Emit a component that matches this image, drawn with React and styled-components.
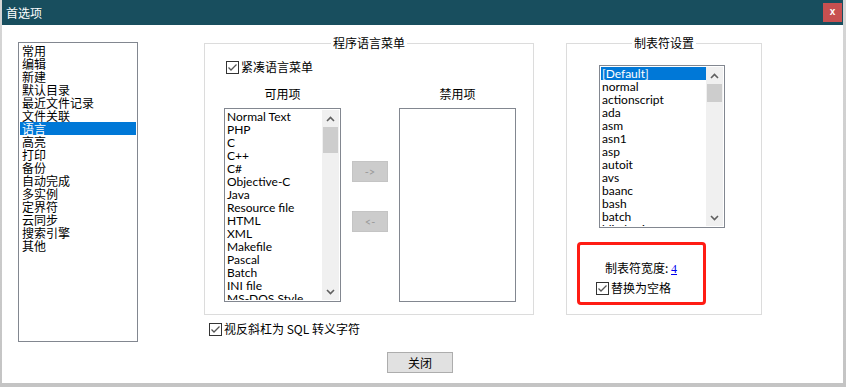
import React from 'react';
import styled, { createGlobalStyle } from 'styled-components';

const Global = createGlobalStyle`
  html, body { margin: 0; padding: 0; }
  body {
    width: 846px;
    height: 387px;
    overflow: hidden;
    background: linear-gradient(to bottom, #d6d6d6, #c4c4c4);
    font-family: "Noto Sans CJK SC", sans-serif;
  }
`;

const CJK = `"Noto Sans CJK SC", "Noto Sans", sans-serif`;
const LATIN = `Lato, "Noto Sans CJK SC", sans-serif`;

const Window = styled.div`
  margin-left: 2px;
  width: 841px;
  height: 383px;
  background: #fff;
  display: flex;
  flex-direction: column;
`;

const TitleBar = styled.div`
  height: 25px;
  flex: none;
  background: #184e5e;
  display: flex;
  align-items: center;
  justify-content: space-between;
  padding: 0 1px 0 4px;
  color: #fff;
  font: 12px ${CJK};
`;

const CloseBox = styled.div`
  width: 19px;
  height: 19px;
  background: #c75050;
  color: #fff;
  display: flex;
  align-items: center;
  justify-content: center;
  font: bold 10px "Liberation Sans", sans-serif;
  line-height: 1;
  padding-bottom: 2px;
  box-sizing: border-box;
`;

const Body = styled.div`
  flex: 1;
  display: flex;
  flex-direction: column;
`;

const MainRow = styled.div`
  display: flex;
  align-items: flex-start;
  padding: 17px 0 0 16px;
`;

const ListBox = styled.div`
  box-sizing: border-box;
  width: ${p => p.$w}px;
  height: ${p => p.$h}px;
  margin: ${p => p.$m || '0'};
  border: 1px solid #828790;
  padding: 1px;
  background: #fff;
  display: flex;
  overflow: hidden;
`;

const Items = styled.div`
  flex: 1;
  overflow: hidden;
  min-width: 0;
`;

const Item = styled.div`
  height: 13px;
  padding-left: ${p => (p.$latin ? 1 : 2)}px;
  font: 12px ${p => (p.$latin ? LATIN : CJK)};
  line-height: 13px;
  white-space: nowrap;
  color: ${p => (p.$sel ? '#fff' : '#000')};
  background: ${p => (p.$sel ? '#0078d7' : 'transparent')};
`;

const ScrollTrack = styled.div`
  width: 17px;
  flex: none;
  background: #f0f0f0;
  display: flex;
  flex-direction: column;
`;

const ScrollArrow = styled.div`
  height: 17px;
  flex: none;
  display: flex;
  align-items: center;
  justify-content: center;
`;

const ScrollThumb = styled.div`
  height: ${p => p.$h}px;
  margin: 0 1px;
  background: #cdcdcd;
`;

const ScrollSpacer = styled.div`
  flex: 1;
`;

const Group = styled.div`
  position: relative;
  box-sizing: border-box;
  width: ${p => p.$w}px;
  height: 272px;
  border: 1px solid #dcdcdc;
  padding: ${p => p.$pad};
`;

const GroupTitle = styled.div`
  position: absolute;
  top: -8px;
  left: 0;
  right: 0;
  display: flex;
  justify-content: center;
  font: 12px ${CJK};
  line-height: 14px;
  color: #000;
  & > span {
    background: #fff;
    padding: 0 2px;
  }
`;

const MidColumn = styled.div`
  margin: 1px 0 0 66px;
  display: flex;
  flex-direction: column;
`;

const RightColumn = styled.div`
  margin: 1px 0 0 32px;
`;

const CheckRow = styled.label`
  display: flex;
  align-items: center;
  gap: 2px;
  height: 14px;
  margin: ${p => p.$m || '0'};
  font: 12px ${CJK};
  line-height: 14px;
  color: #000;
  white-space: nowrap;
`;

const Box = styled.span`
  box-sizing: border-box;
  width: 13px;
  height: 13px;
  border: 1px solid #333;
  background: #fff;
  display: inline-flex;
  align-items: center;
  justify-content: center;
  flex: none;
`;

const ListsGrid = styled.div`
  display: grid;
  grid-template-columns: 117px 36px 117px;
  grid-template-rows: 13px auto;
  column-gap: 11px;
  row-gap: 8px;
  margin-top: 13px;
`;

const ColLabel = styled.div`
  grid-column: ${p => p.$col};
  text-align: center;
  font: 12px ${CJK};
  line-height: 13px;
`;

const MoveButtons = styled.div`
  display: flex;
  flex-direction: column;
  gap: 29px;
  padding-top: 53px;
`;

const MoveButton = styled.div`
  box-sizing: border-box;
  height: 21px;
  background: #cccccc;
  border: 1px solid #c4c4c4;
  color: #9a9a9a;
  font: 11px ${LATIN};
  display: flex;
  align-items: center;
  justify-content: center;
`;

const Annot = styled.div`
  box-sizing: border-box;
  width: 129px;
  height: 63px;
  margin-top: 14px;
  border: 3px solid #ff1c14;
  border-radius: 4px;
  padding: 16px 0 0 0;
`;

const WidthLine = styled.div`
  padding-left: 25px;
  font: 12px ${CJK};
  line-height: 13px;
  white-space: nowrap;
`;

const Link = styled.span`
  color: #0000ee;
  text-decoration: underline;
  font: 12px "Liberation Serif", serif;
`;

const Footer = styled.div`
  padding: 10px 0 0 385px;
`;

const Button = styled.div`
  box-sizing: border-box;
  width: 66px;
  height: 21px;
  background: #e1e1e1;
  border: 1px solid #adadad;
  font: 12px ${CJK};
  display: flex;
  align-items: center;
  justify-content: center;
  color: #000;
`;

const Check = () => (
  <Box>
    <svg width="11" height="11" viewBox="0 0 11 11">
      <polyline points="1.5,5.5 4,8 9.5,2.5" fill="none" stroke="#555" strokeWidth="1.3" />
    </svg>
  </Box>
);

const Chevron = ({ down }) => (
  <svg width="9" height="6" viewBox="0 0 9 6">
    <polyline
      points={down ? '1,1 4.5,4.5 8,1' : '1,5 4.5,1.5 8,5'}
      fill="none"
      stroke="#606060"
      strokeWidth="1.6"
    />
  </svg>
);

const Scrollbar = ({ thumb }) => (
  <ScrollTrack>
    <ScrollArrow><Chevron /></ScrollArrow>
    <ScrollThumb $h={thumb} />
    <ScrollSpacer />
    <ScrollArrow><Chevron down /></ScrollArrow>
  </ScrollTrack>
);

const nav = ['常用', '编辑', '新建', '默认目录', '最近文件记录', '文件关联', '语言', '高亮', '打印', '备份', '自动完成', '多实例', '定界符', '云同步', '搜索引擎', '其他'];
const langs = ['Normal Text', 'PHP', 'C', 'C++', 'C#', 'Objective-C', 'Java', 'Resource file', 'HTML', 'XML', 'Makefile', 'Pascal', 'Batch', 'INI file', 'MS-DOS Style'];
const tabs = ['[Default]', 'normal', 'actionscript', 'ada', 'asm', 'asn1', 'asp', 'autoit', 'avs', 'baanc', 'bash', 'batch', 'blitzbasic'];

export default function App() {
  return (
    <>
      <Global />
      <Window>
        <TitleBar>
          <span>首选项</span>
          <CloseBox>x</CloseBox>
        </TitleBar>
        <Body>
          <MainRow>
            <ListBox $w={120} $h={300}>
              <Items>
                {nav.map(n => (
                  <Item key={n} $sel={n === '语言'}>{n}</Item>
                ))}
              </Items>
            </ListBox>

            <MidColumn>
              <Group $w={330} $pad="16px 0 0 19px">
                <GroupTitle><span>程序语言菜单</span></GroupTitle>
                <CheckRow $m="0 0 0 2px"><Check />紧凑语言菜单</CheckRow>
                <ListsGrid>
                  <ColLabel $col={1}>可用项</ColLabel>
                  <ColLabel $col={3}>禁用项</ColLabel>
                  <ListBox $w={117} $h={194}>
                    <Items>
                      {langs.map(l => <Item key={l} $latin>{l}</Item>)}
                    </Items>
                    <Scrollbar thumb={26} />
                  </ListBox>
                  <MoveButtons>
                    <MoveButton>-&gt;</MoveButton>
                    <MoveButton>&lt;-</MoveButton>
                  </MoveButtons>
                  <ListBox $w={117} $h={194} />
                </ListsGrid>
              </Group>
              <CheckRow $m="7px 0 0 5px"><Check />视反斜杠为 SQL 转义字符</CheckRow>
            </MidColumn>

            <RightColumn>
              <Group $w={196} $pad="21px 0 0 10px">
                <GroupTitle><span>制表符设置</span></GroupTitle>
                <ListBox $w={126} $h={163} $m="0 0 0 22px">
                  <Items>
                    {tabs.map((t, i) => <Item key={t} $latin $sel={i === 0}>{t}</Item>)}
                  </Items>
                  <Scrollbar thumb={18} />
                </ListBox>
                <Annot>
                  <WidthLine>制表符宽度: <Link>4</Link></WidthLine>
                  <CheckRow $m="4px 0 0 16px"><Check />替换为空格</CheckRow>
                </Annot>
              </Group>
            </RightColumn>
          </MainRow>
          <Footer>
            <Button>关闭</Button>
          </Footer>
        </Body>
      </Window>
    </>
  );
}
